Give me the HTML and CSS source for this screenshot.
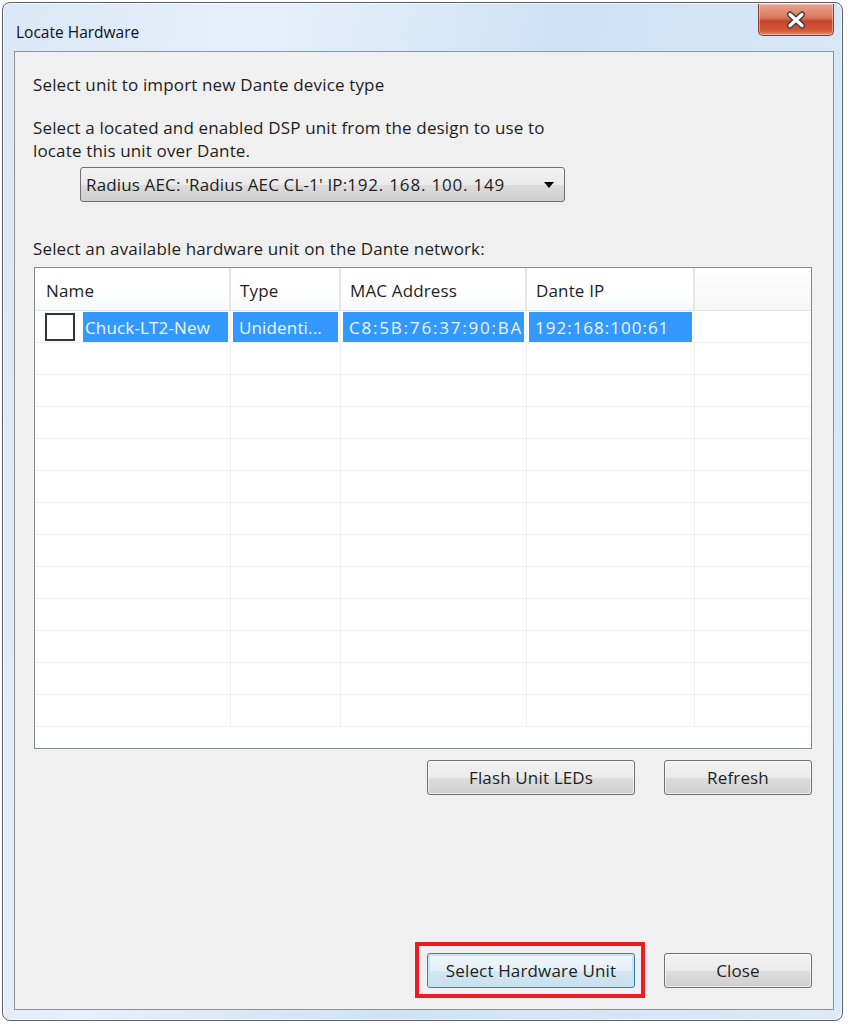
FILE: index.html
```html
<!DOCTYPE html>
<html lang="en">
<head>
  <meta charset="UTF-8" />
  <title>Locate Hardware</title>
  <link rel="stylesheet" href="styles.css">
</head>
<body>
  <div class="window">
    <div class="titlebar">
      <span class="title">Locate Hardware</span>
      <button class="close-btn" aria-label="Close">
        <svg width="22" height="18" viewBox="0 0 22 18">
          <path d="M5 3.5 L17 14.5 M17 3.5 L5 14.5" stroke="#3a3a3a" stroke-width="6" stroke-linecap="round"/>
          <path d="M5 3.5 L17 14.5 M17 3.5 L5 14.5" stroke="#ffffff" stroke-width="3.4" stroke-linecap="round"/>
        </svg>
      </button>
    </div>

    <div class="client">
      <p class="label first">Select unit to import new Dante device type</p>
      <p class="label second">Select a located and enabled DSP unit from the design to use to<br>locate this unit over Dante.</p>

      <div class="combo">
        <span class="combo-text">Radius AEC: 'Radius AEC CL-1' IP:<span class="spaced">192.&nbsp;168.&nbsp;100.&nbsp;149</span></span>
        <span class="combo-arrow"></span>
      </div>

      <p class="label list-label">Select an available hardware unit on the Dante network:</p>

      <div class="list">
        <div class="list-head">
          <div class="col c-name">Name</div>
          <div class="col c-type">Type</div>
          <div class="col c-mac">MAC Address</div>
          <div class="col c-ip">Dante IP</div>
          <div class="col c-rest"></div>
        </div>
        <div class="list-body">
          <div class="row selected">
            <div class="cell c-name"><span class="check"></span><span class="hl">Chuck-LT2-New</span></div>
            <div class="cell c-type"><span class="hl">Unidenti...</span></div>
            <div class="cell c-mac"><span class="hl mono mac">C8:5B:76:37:90:BA</span></div>
            <div class="cell c-ip"><span class="hl mono">192:168:100:61</span></div>
            <div class="cell c-rest"></div>
          </div>
          <div class="row"><div class="cell c-name"></div><div class="cell c-type"></div><div class="cell c-mac"></div><div class="cell c-ip"></div><div class="cell c-rest"></div></div>
          <div class="row"><div class="cell c-name"></div><div class="cell c-type"></div><div class="cell c-mac"></div><div class="cell c-ip"></div><div class="cell c-rest"></div></div>
          <div class="row"><div class="cell c-name"></div><div class="cell c-type"></div><div class="cell c-mac"></div><div class="cell c-ip"></div><div class="cell c-rest"></div></div>
          <div class="row"><div class="cell c-name"></div><div class="cell c-type"></div><div class="cell c-mac"></div><div class="cell c-ip"></div><div class="cell c-rest"></div></div>
          <div class="row"><div class="cell c-name"></div><div class="cell c-type"></div><div class="cell c-mac"></div><div class="cell c-ip"></div><div class="cell c-rest"></div></div>
          <div class="row"><div class="cell c-name"></div><div class="cell c-type"></div><div class="cell c-mac"></div><div class="cell c-ip"></div><div class="cell c-rest"></div></div>
          <div class="row"><div class="cell c-name"></div><div class="cell c-type"></div><div class="cell c-mac"></div><div class="cell c-ip"></div><div class="cell c-rest"></div></div>
          <div class="row"><div class="cell c-name"></div><div class="cell c-type"></div><div class="cell c-mac"></div><div class="cell c-ip"></div><div class="cell c-rest"></div></div>
          <div class="row"><div class="cell c-name"></div><div class="cell c-type"></div><div class="cell c-mac"></div><div class="cell c-ip"></div><div class="cell c-rest"></div></div>
          <div class="row"><div class="cell c-name"></div><div class="cell c-type"></div><div class="cell c-mac"></div><div class="cell c-ip"></div><div class="cell c-rest"></div></div>
          <div class="row"><div class="cell c-name"></div><div class="cell c-type"></div><div class="cell c-mac"></div><div class="cell c-ip"></div><div class="cell c-rest"></div></div>
          <div class="row"><div class="cell c-name"></div><div class="cell c-type"></div><div class="cell c-mac"></div><div class="cell c-ip"></div><div class="cell c-rest"></div></div>
        </div>
      </div>

      <div class="button-row">
        <button class="btn">Flash Unit LEDs</button>
        <button class="btn small">Refresh</button>
      </div>

      <div class="spacer"></div>

      <div class="button-row bottom">
        <span class="callout"><button class="btn focused">Select Hardware Unit</button></span>
        <button class="btn small">Close</button>
      </div>
    </div>
  </div>
</body>
</html>
```

FILE: styles.css
```css
* {
  margin: 0;
  padding: 0;
  box-sizing: border-box;
}

html, body {
  width: 100%;
  height: 100%;
  background: #ffffff;
  font-family: 'Open Sans', 'Liberation Sans', sans-serif;
  font-size: 17px;
  letter-spacing: 0.15px;
  color: #1e1e1e;
  overflow: hidden;
}

.window {
  position: relative;
  margin: 2px 0 0 2px;
  width: 841px;
  height: 1019px;
  border: 1px solid #5c5f63;
  border-radius: 8px;
  background: linear-gradient(100deg, #d9e7f6 0%, #e6f0fa 25%, #cfe2f6 55%, #dceaf8 100%);
  box-shadow: inset 0 0 0 1px rgba(255, 255, 255, 0.7);
  display: flex;
  flex-direction: column;
  padding: 0 8px 10px 11px;
}

.titlebar {
  height: 48px;
  display: flex;
  justify-content: space-between;
  align-items: flex-start;
}

.title {
  margin-top: 18px;
  margin-left: 2px;
  font-size: 15.5px;
  letter-spacing: 0;
  color: #111;
}

.close-btn {
  margin-top: 1px;
  width: 76px;
  height: 32px;
  border: 1px solid #8a3a2c;
  border-top: none;
  border-radius: 0 0 5px 5px;
  background: linear-gradient(#e9a48f 0%, #d9765c 45%, #c5432a 55%, #d4583b 85%, #e48a6e 100%);
  box-shadow: inset 0 0 0 1px rgba(255, 220, 210, 0.5);
  display: flex;
  align-items: center;
  justify-content: center;
  cursor: pointer;
}

.client {
  flex: 1;
  border: 1px solid #8e949b;
  background: #f0f0f0;
  padding: 21px 21px 11px 18px;
  display: flex;
  flex-direction: column;
}

.label {
  line-height: 23px;
}

.label.second {
  margin-top: 20px;
}

.list-label {
  margin-top: 35px;
}

.combo {
  margin: 5px 0 0 47px;
  width: 485px;
  height: 35px;
  border: 1px solid #707070;
  border-radius: 3px;
  background: linear-gradient(#f2f2f2 0%, #ebebeb 50%, #dddddd 51%, #cfcfcf 100%);
  display: flex;
  align-items: center;
  justify-content: space-between;
  padding: 0 10px 0 5px;
}

.spaced {
  letter-spacing: 0.8px;
}

.combo-arrow {
  width: 0;
  height: 0;
  border-left: 5px solid transparent;
  border-right: 5px solid transparent;
  border-top: 6px solid #000;
}

.list {
  margin: 7px 0 0 1px;
  height: 482px;
  border: 1px solid #828790;
  background: #ffffff;
  overflow: hidden;
}

.list-head {
  display: flex;
  height: 43px;
  border-bottom: 1px solid #e5e5e5;
  background: linear-gradient(#ffffff 0%, #ffffff 60%, #f7f8f9 100%);
}

.list-head .col {
  display: flex;
  align-items: center;
  padding: 3px 0 0 9px;
  border-right: 2px solid #e6e6e6;
}

.list-head .c-name {
  padding-left: 11px;
}

.list-head .c-rest {
  border-right: none;
  background: linear-gradient(#ffffff 0%, #f5f5f5 100%);
}

.c-name { width: 196px; }
.c-type { width: 110px; }
.c-mac  { width: 186px; }
.c-ip   { width: 168px; }
.c-rest { flex: 1; }

.row {
  display: flex;
  height: 32px;
  border-bottom: 1px solid #f0f0f0;
}

.cell {
  border-right: 1px solid #f0f0f0;
  display: flex;
  align-items: stretch;
  padding: 1px 0;
}

.cell.c-rest {
  border-right: none;
}

.row.selected .cell {
  padding: 1px 2px 0 2px;
}

.row.selected .c-name {
  padding-left: 10px;
}

.check {
  width: 30px;
  height: 28px;
  margin-top: 1px;
  border: 2px solid #333333;
  background: #ffffff;
  margin-right: 8px;
}

.hl {
  flex: 1;
  background: #3399ff;
  color: #eef5ff;
  display: flex;
  align-items: center;
  padding-left: 6px;
  white-space: nowrap;
  overflow: hidden;
}

.row.selected .c-name .hl {
  padding-left: 2px;
}

.mono {
  letter-spacing: 1px;
}

.mono.mac {
  letter-spacing: 1.8px;
}

.row.selected .c-rest {
  padding: 0;
}

.button-row {
  display: flex;
  justify-content: flex-end;
  align-items: center;
  gap: 29px;
  margin-top: 11px;
}

.spacer {
  flex: 1;
}

.btn {
  width: 208px;
  height: 35px;
  border: 1px solid #707070;
  border-radius: 3px;
  background: linear-gradient(#f2f2f2 0%, #ebebeb 50%, #dddddd 51%, #cfcfcf 100%);
  box-shadow: inset 0 0 0 1px rgba(255, 255, 255, 0.6);
  font-family: 'Open Sans', 'Liberation Sans', sans-serif;
  font-size: 17px;
  letter-spacing: 0.15px;
  color: #1e1e1e;
  cursor: pointer;
}

.btn.small {
  width: 148px;
}

.btn.focused {
  border-color: #3c7fb1;
  box-shadow: inset 0 0 0 2px #bfe6f7;
  background: linear-gradient(#f0f7fb 0%, #e5f1f8 50%, #d5e8f3 51%, #c7dfee 100%);
}

.button-row.bottom {
  gap: 19px;
  margin-top: 0;
}

.callout {
  border: 4px solid #ed1c24;
  padding: 7px 6px 6px 8px;
  display: flex;
}
```
